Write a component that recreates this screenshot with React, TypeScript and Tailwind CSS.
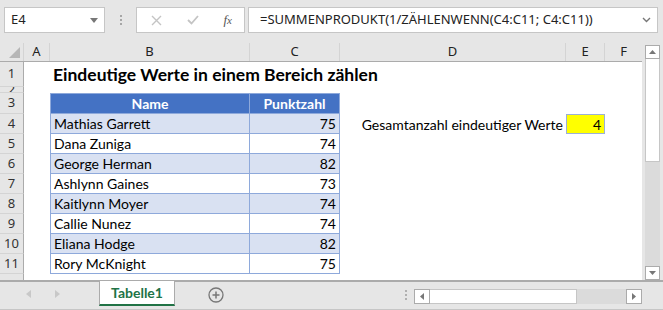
import React from 'react';

type Person = { name: string; score: number };

const people: Person[] = [
  { name: 'Mathias Garrett', score: 75 },
  { name: 'Dana Zuniga', score: 74 },
  { name: 'George Herman', score: 82 },
  { name: 'Ashlynn Gaines', score: 73 },
  { name: 'Kaitlynn Moyer', score: 74 },
  { name: 'Callie Nunez', score: 74 },
  { name: 'Eliana Hodge', score: 82 },
  { name: 'Rory McKnight', score: 75 },
];

const columns = [
  { id: 'A', width: 'w-[26px]' },
  { id: 'B', width: 'w-[200px]' },
  { id: 'C', width: 'w-[90px]' },
  { id: 'D', width: 'w-[226px]' },
  { id: 'E', width: 'w-[39px]' },
  { id: 'F', width: 'w-[37px]' },
];

const uiFont = { fontFamily: '"Noto Sans", "Open Sans", sans-serif' };
const cellFont = { fontFamily: 'Lato, "Open Sans", sans-serif' };

// --- Formula bar ---
const FormulaBar: React.FC = () => (
  <div className="h-[43px] flex items-start pt-[7px] pl-[4px]">
    <div className="w-[101px] h-[26px] bg-white border border-[#c6c6c6] flex items-center justify-between pl-[6px] pr-[6px] text-[13px] text-[#222]">
      <span>E4</span>
      <svg width="8" height="5" viewBox="0 0 8 5"><path d="M0 0h8L4 5z" fill="#777" /></svg>
    </div>
    <div className="w-[31px] h-[26px] flex flex-col items-center justify-center gap-[2px]">
      <span className="w-[2px] h-[2px] bg-[#a6a6a6]" />
      <span className="w-[2px] h-[2px] bg-[#a6a6a6]" />
      <span className="w-[2px] h-[2px] bg-[#a6a6a6]" />
    </div>
    <div className="w-[109px] h-[26px] bg-white border border-[#c6c6c6] flex items-center pl-[14px] pr-[12px] justify-between">
      <svg width="11" height="11" viewBox="0 0 11 11"><path d="M1 1l9 9M10 1l-9 9" stroke="#c4c4c4" strokeWidth="1.4" /></svg>
      <svg width="12" height="10" viewBox="0 0 12 10"><path d="M1 5l3.5 3.5L11 1" stroke="#c4c4c4" strokeWidth="1.8" fill="none" /></svg>
      <span className="italic text-[13px] text-[#555]" style={{ fontFamily: '"Liberation Serif", serif' }}>
        f<span className="text-[11px]">x</span>
      </span>
    </div>
    <div className="ml-[3px] w-[410px] h-[26px] bg-white border border-[#c6c6c6] flex items-center justify-between pl-[11px] pr-[6px] text-[13px] text-[#222]">
      <span>=SUMMENPRODUKT(1/ZÄHLENWENN(C4:C11; C4:C11))</span>
      <svg width="9" height="6" viewBox="0 0 9 6"><path d="M1 1l3.5 3.5L8 1" stroke="#777" strokeWidth="1.4" fill="none" /></svg>
    </div>
  </div>
);

// --- Sheet ---
const RowHeader: React.FC<{ label: string; h: string }> = ({ label, h }) => (
  <div className={`w-[24px] ${h} shrink-0 bg-[#e6e6e6] border-r border-[#ababab] border-b border-b-[#d4d4d4] flex items-center justify-center text-[13px] text-[#333] overflow-hidden`} style={uiFont}>
    {label}
  </div>
);

const Sheet: React.FC = () => (
  <div className="w-[642px] shrink-0 flex flex-col">
    {/* column headers */}
    <div className="h-[19px] flex border-b border-[#ababab]">
      <div className="w-[24px] h-full border-r border-[#d4d4d4] flex items-end justify-end pr-[3px] pb-[3px]">
        <svg width="11" height="11" viewBox="0 0 11 11"><path d="M11 0v11H0z" fill="#b6b6b6" /></svg>
      </div>
      {columns.map(c => (
        <div key={c.id} className={`${c.width} h-full border-r border-[#d4d4d4] last:border-r-0 flex items-center justify-center text-[13px] text-[#222]`} style={uiFont}>
          {c.id}
        </div>
      ))}
    </div>

    <div className="bg-white flex-1 flex flex-col" style={cellFont}>
      {/* row 1 */}
      <div className="flex">
        <RowHeader label="1" h="h-[25px]" />
        <div className="w-[26px]" />
        <div className="pl-[3px] pt-[2px] text-[17.5px] leading-[22px] font-bold text-black whitespace-nowrap">
          Eindeutige Werte in einem Bereich zählen
        </div>
      </div>
      {/* row 2 */}
      <div className="flex">
        <RowHeader label="2" h="h-[6px]" />
      </div>
      {/* row 3 */}
      <div className="flex">
        <RowHeader label="3" h="h-[21px]" />
        <div className="w-[26px]" />
        <div className="w-[200px] h-[21px] bg-[#4472c4] border border-[#8ea9db] flex items-center justify-center text-white font-bold text-[14px]">Name</div>
        <div className="w-[90px] h-[21px] bg-[#4472c4] border border-l-0 border-[#8ea9db] flex items-center justify-center text-white font-bold text-[14px]">Punktzahl</div>
      </div>
      {people.map((p, i) => {
        const band = i % 2 === 0 ? 'bg-[#d9e1f2]' : 'bg-white';
        return (
          <div key={p.name} className="flex">
            <RowHeader label={String(i + 4)} h="h-[20px]" />
            <div className="w-[26px]" />
            <div className={`w-[200px] h-[20px] ${band} border-l border-r border-b border-[#8ea9db] flex items-center pl-[3px] text-[14px] text-black`}>{p.name}</div>
            <div className={`w-[90px] h-[20px] ${band} border-r border-b border-[#8ea9db] flex items-center justify-end pr-[3px] text-[14px] text-black`}>{p.score}</div>
            {i === 0 && (
              <>
                <div className="w-[226px] h-[20px] flex items-center justify-end pr-[3px] text-[14px] text-black whitespace-nowrap">Gesamtanzahl eindeutiger Werte</div>
                <div className="w-[39px] h-[20px] bg-[#ffff00] border border-[#9bb0d6] flex items-center justify-end pr-[3px] text-[14px] text-black">4</div>
              </>
            )}
          </div>
        );
      })}
      <div className="flex flex-1">
        <div className="w-[24px] bg-[#e6e6e6] border-r border-[#ababab]" />
      </div>
    </div>
  </div>
);

const VScroll: React.FC = () => (
  <div className="w-[15px] ml-[3px] mt-[2px] flex flex-col bg-[#dbdbdb]">
    <div className="h-[14px] bg-white border border-[#ababab] flex items-center justify-center">
      <svg width="7" height="4" viewBox="0 0 7 4"><path d="M0 4h7L3.5 0z" fill="#777" /></svg>
    </div>
    <div className="h-[103px] bg-white border-x border-b border-[#c6c6c6]" />
    <div className="flex-1" />
    <div className="h-[14px] bg-white border border-[#ababab] flex items-center justify-center">
      <svg width="7" height="4" viewBox="0 0 7 4"><path d="M0 0h7L3.5 4z" fill="#777" /></svg>
    </div>
  </div>
);

// --- Tab bar ---
const TabBar: React.FC = () => (
  <div className="h-[29px] flex items-start border-t border-[#ababab] border-b border-b-[#c6c6c6]" style={uiFont}>
    <div className="w-[99px] h-[24px] flex items-center pl-[26px] gap-[24px]">
      <svg width="5" height="8" viewBox="0 0 5 8"><path d="M5 0v8L0 4z" fill="#c8c8c8" /></svg>
      <svg width="5" height="8" viewBox="0 0 5 8"><path d="M0 0v8l5-4z" fill="#c8c8c8" /></svg>
    </div>
    <div className="w-[76px] h-[25px] -mt-px bg-white border-x border-[#ababab] border-b-2 border-b-[#217346] flex items-center justify-center text-[14px] font-bold text-[#217346]" style={cellFont}>
      Tabelle1
    </div>
    <div className="w-[82px] h-[25px] flex items-center justify-center">
      <svg width="16" height="16" viewBox="0 0 16 16">
        <circle cx="8" cy="8" r="7" fill="none" stroke="#777" strokeWidth="1.3" />
        <path d="M8 4.5v7M4.5 8h7" stroke="#777" strokeWidth="1.5" />
      </svg>
    </div>
    <div className="flex-1" />
    <div className="w-[16px] h-[25px] flex flex-col items-center justify-center gap-[2px]">
      <span className="w-[2px] h-[2px] bg-[#b0b0b0]" />
      <span className="w-[2px] h-[2px] bg-[#b0b0b0]" />
      <span className="w-[2px] h-[2px] bg-[#b0b0b0]" />
    </div>
    <div className="w-[228px] h-[15px] mt-[7px] mr-[21px] flex bg-[#dbdbdb]">
      <div className="w-[16px] h-full bg-white border border-[#ababab] flex items-center justify-center">
        <svg width="4" height="7" viewBox="0 0 4 7"><path d="M4 0v7L0 3.5z" fill="#777" /></svg>
      </div>
      <div className="w-[147px] h-full bg-white border-y border-r border-[#c6c6c6]" />
      <div className="flex-1" />
      <div className="w-[16px] h-full bg-white border border-[#ababab] flex items-center justify-center">
        <svg width="4" height="7" viewBox="0 0 4 7"><path d="M0 0v7l4-3.5z" fill="#777" /></svg>
      </div>
    </div>
  </div>
);

export default function App() {
  return (
    <div className="w-[663px] h-[310px] bg-[#e6e6e6] overflow-hidden flex flex-col" style={uiFont}>
      <FormulaBar />
      <div className="h-[238px] flex border-b border-[#ababab]">
        <Sheet />
        <VScroll />
      </div>
      <TabBar />
    </div>
  );
}
